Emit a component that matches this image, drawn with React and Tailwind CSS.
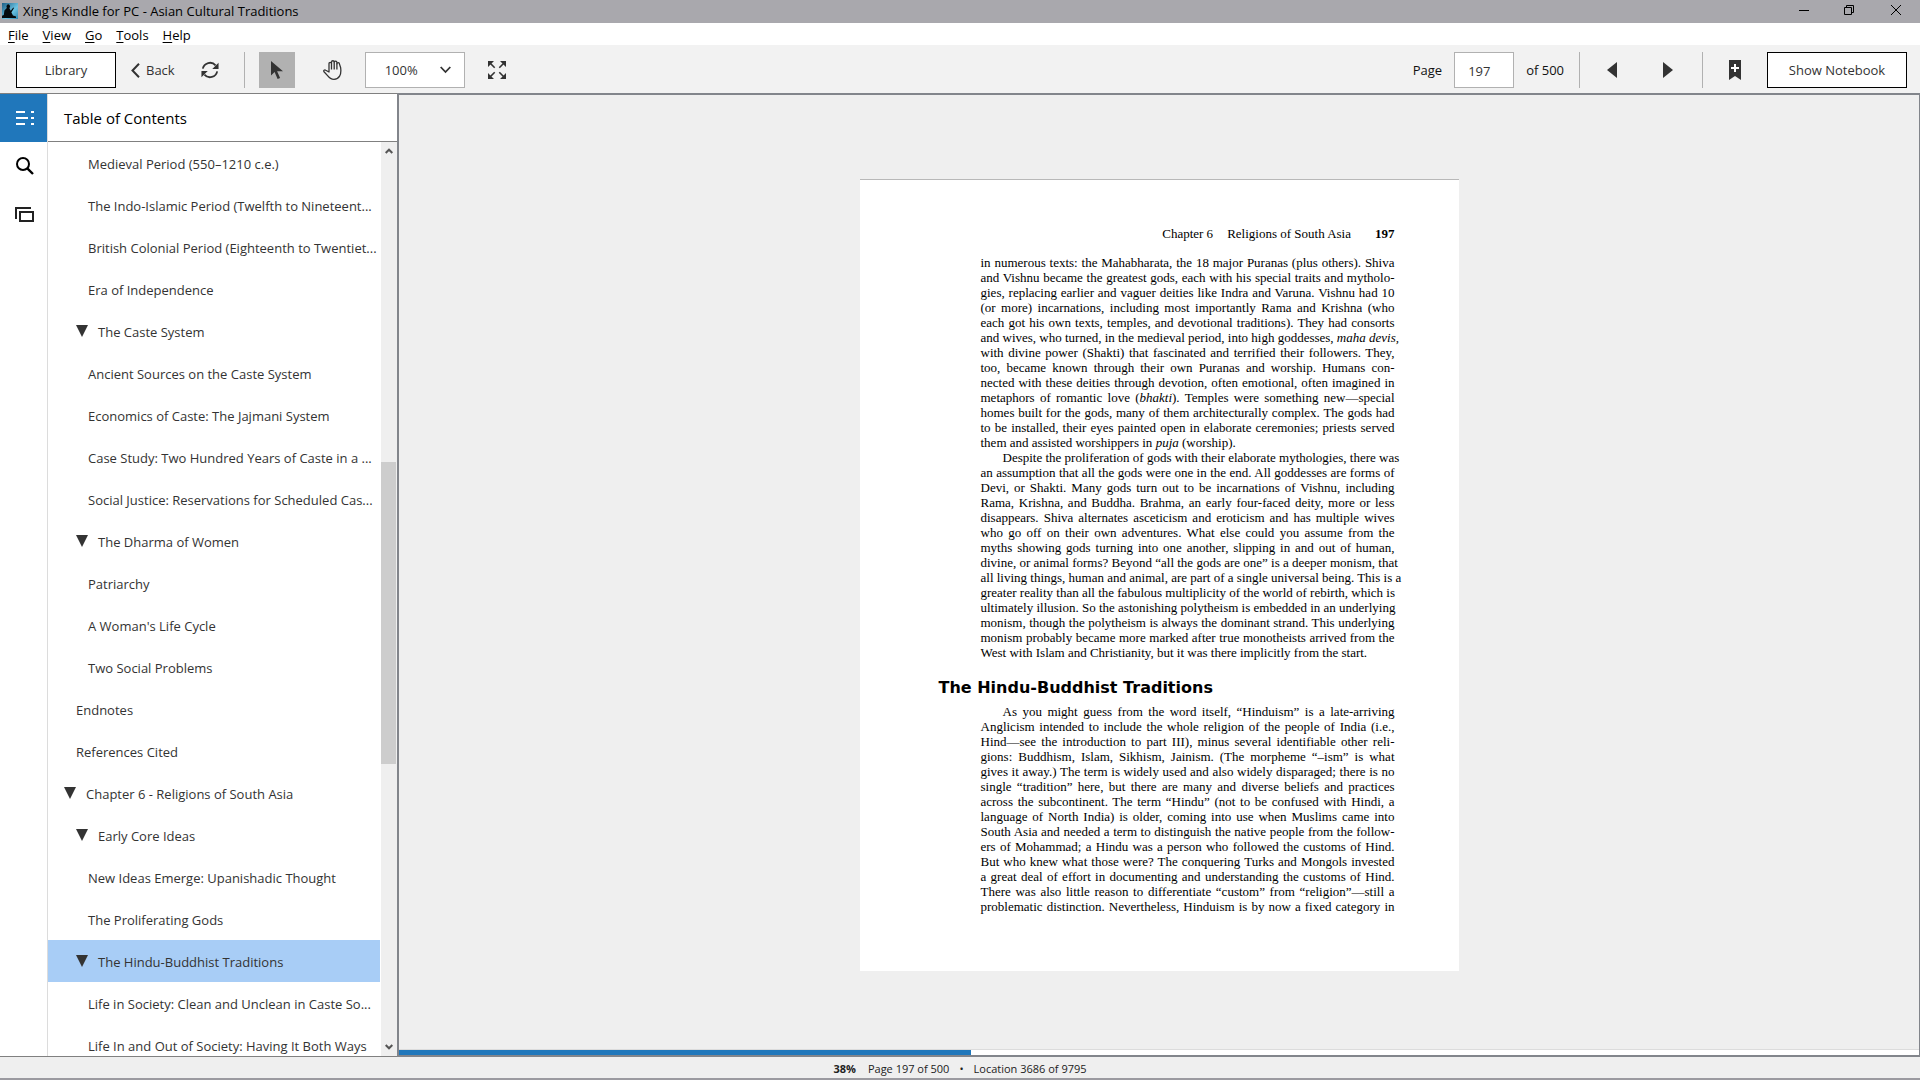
import { useState } from "react";

const menus = ["File", "View", "Go", "Tools", "Help"];

const tocItems = [
  { level: 3, title: "Medieval Period (550–1210 c.e.)" },
  { level: 3, title: "The Indo-Islamic Period (Twelfth to Nineteent..." },
  { level: 3, title: "British Colonial Period (Eighteenth to Twentiet..." },
  { level: 3, title: "Era of Independence" },
  { level: 2, title: "The Caste System", open: true },
  { level: 3, title: "Ancient Sources on the Caste System" },
  { level: 3, title: "Economics of Caste: The Jajmani System" },
  { level: 3, title: "Case Study: Two Hundred Years of Caste in a ..." },
  { level: 3, title: "Social Justice: Reservations for Scheduled Cas..." },
  { level: 2, title: "The Dharma of Women", open: true },
  { level: 3, title: "Patriarchy" },
  { level: 3, title: "A Woman's Life Cycle" },
  { level: 3, title: "Two Social Problems" },
  { level: 2, title: "Endnotes" },
  { level: 2, title: "References Cited" },
  { level: 1, title: "Chapter 6 - Religions of South Asia", open: true },
  { level: 2, title: "Early Core Ideas", open: true },
  { level: 3, title: "New Ideas Emerge: Upanishadic Thought" },
  { level: 3, title: "The Proliferating Gods" },
  { level: 2, title: "The Hindu-Buddhist Traditions", open: true },
  { level: 3, title: "Life in Society: Clean and Unclean in Caste So..." },
  { level: 3, title: "Life In and Out of Society: Having It Both Ways" },
];

const indents = { 1: "pl-4", 2: "pl-7", 3: "pl-10" };

// *word* marks italics
const firstParagraph = [
  "in numerous texts: the Mahabharata, the 18 major Puranas (plus others). Shiva",
  "and Vishnu became the greatest gods, each with his special traits and mytholo-",
  "gies, replacing earlier and vaguer deities like Indra and Varuna. Vishnu had 10",
  "(or more) incarnations, including most importantly Rama and Krishna (who",
  "each got his own texts, temples, and devotional traditions). They had consorts",
  "and wives, who turned, in the medieval period, into high goddesses, *maha devis,*",
  "with divine power (Shakti) that fascinated and terrified their followers. They,",
  "too, became known through their own Puranas and worship. Humans con-",
  "nected with these deities through devotion, often emotional, often imagined in",
  "metaphors of romantic love (*bhakti*). Temples were something new—special",
  "homes built for the gods, many of them architecturally complex. The gods had",
  "to be installed, their eyes painted open in elaborate ceremonies; priests served",
  "them and assisted worshippers in *puja* (worship).",
];

const secondParagraph = [
  "Despite the proliferation of gods with their elaborate mythologies, there was",
  "an assumption that all the gods were one in the end. All goddesses are forms of",
  "Devi, or Shakti. Many gods turn out to be incarnations of Vishnu, including",
  "Rama, Krishna, and Buddha. Brahma, an early four-faced deity, more or less",
  "disappears. Shiva alternates asceticism and eroticism and has multiple wives",
  "who go off on their own adventures. What else could you assume from the",
  "myths showing gods turning into one another, slipping in and out of human,",
  "divine, or animal forms? Beyond “all the gods are one” is a deeper monism, that",
  "all living things, human and animal, are part of a single universal being. This is a",
  "greater reality than all the fabulous multiplicity of the world of rebirth, which is",
  "ultimately illusion. So the astonishing polytheism is embedded in an underlying",
  "monism, though the polytheism is always the dominant strand. This underlying",
  "monism probably became more marked after true monotheists arrived from the",
  "West with Islam and Christianity, but it was there implicitly from the start.",
];

const thirdParagraph = [
  "As you might guess from the word itself, “Hinduism” is a late-arriving",
  "Anglicism intended to include the whole religion of the people of India (i.e.,",
  "Hind—see the introduction to part III), minus several identifiable other reli-",
  "gions: Buddhism, Islam, Sikhism, Jainism. (The morpheme “–ism” is what",
  "gives it away.) The term is widely used and also widely disparaged; there is no",
  "single “tradition” here, but there are many and diverse beliefs and practices",
  "across the subcontinent. The term “Hindu” (not to be confused with Hindi, a",
  "language of North India) is older, coming into use when Muslims came into",
  "South Asia and needed a term to distinguish the native people from the follow-",
  "ers of Mohammad; a Hindu was a person who followed the customs of Hind.",
  "But who knew what those were? The conquering Turks and Mongols invested",
  "a great deal of effort in documenting and understanding the customs of Hind.",
  "There was also little reason to differentiate “custom” from “religion”—still a",
  "problematic distinction. Nevertheless, Hinduism is by now a fixed category in",
];

function Paragraph({ lines, indent, full }) {
  return (
    <p>
      {lines.map((line, i) => {
        const ragged = i === lines.length - 1 && !full;
        return (
          <span
            key={i}
            className={`block whitespace-nowrap ${ragged ? "" : "[text-align-last:justify]"} ${
              indent && i === 0 ? "pl-[22px]" : ""
            }`}
          >
            {line.split("*").map((part, j) => (j % 2 ? <em key={j}>{part}</em> : part))}
          </span>
        );
      })}
    </p>
  );
}

function TitleBar() {
  return (
    <header className="flex h-[23px] shrink-0 items-start bg-[#a9a8ad] pl-0.5 text-black">
      <svg className="mt-[3px] h-4 w-4" viewBox="0 0 16 16">
        <defs>
          <linearGradient id="sky" x1="0" y1="0" x2="1" y2="1">
            <stop offset="0" stopColor="#1d5f86" />
            <stop offset="0.6" stopColor="#6cc4e4" />
            <stop offset="1" stopColor="#2f87b0" />
          </linearGradient>
        </defs>
        <rect width="16" height="16" fill="url(#sky)" />
        <path
          d="M5.500 1.500a1.900 1.900 0 0 1 2.500 2.300L7.400 5.200l1.300 2.600 2.600-3.200.7.500-2.600 4.300 1.600 3 3 1.200V15H0v-2.200l1.800-.8L2.400 7.500 4.800 5 4.400 3z"
          fill="#05090c"
        />
      </svg>
      <h1 className="ml-[5px] text-[13px] leading-[22px]">Xing's Kindle for PC - Asian Cultural Traditions</h1>
      <div className="ml-auto flex">
        <button aria-label="Minimize" className="flex h-5 w-[45px] items-center justify-center">
          <svg width="10" height="10" viewBox="0 0 10 10"><path d="M0 5.5h10" stroke="#000" /></svg>
        </button>
        <button aria-label="Restore" className="flex h-5 w-[45px] items-center justify-center">
          <svg width="10" height="10" viewBox="0 0 10 10" fill="none" stroke="#000">
            <path d="M.5 2.5h7v7h-7zM2.5 2.5v-2h7v7h-2" />
          </svg>
        </button>
        <button aria-label="Close" className="flex h-5 w-[49px] items-center justify-center">
          <svg width="10" height="10" viewBox="0 0 10 10"><path d="M0 0l10 10M10 0L0 10" stroke="#000" /></svg>
        </button>
      </div>
    </header>
  );
}

function Divider() {
  return <div className="h-9 w-px bg-[#b1b1b1]" />;
}

function Toolbar() {
  const [page, setPage] = useState("197");
  const [zoom, setZoom] = useState("100%");

  return (
    <div className="flex h-12 shrink-0 items-center bg-[#f2f2f2] pt-0.5 pr-[13px] pl-4 text-[#333]">
      <button className="h-9 w-[100px] border border-black bg-white pt-0.5 text-[13px]">Library</button>
      <button className="ml-[15px] flex items-center gap-1.5 text-[13px]">
        <svg width="9" height="15" viewBox="0 0 9 15" fill="none" stroke="#333" strokeWidth="2">
          <path d="M8 .8L1.500 7.500 8 14.200" />
        </svg>
        <span className="pt-0.5">Back</span>
      </button>
      <button aria-label="Sync" className="ml-[26px]">
        <svg width="18" height="18" viewBox="0 0 20 20" fill="none" stroke="#333" strokeWidth="2">
          <path d="M2 8.500A8.200 8.200 0 0 1 16.200 4.800M18 11.500A8.200 8.200 0 0 1 3.800 15.200" />
          <path d="M19.500 2v7h-7zM.5 18v-7h7z" fill="#333" stroke="none" />
        </svg>
      </button>
      <div className="ml-[25px]"><Divider /></div>
      <button aria-label="Select text" className="ml-3.5 flex h-9 w-9 items-center justify-center bg-[#b1b1b1]">
        <svg width="12" height="18" viewBox="0 0 12 18">
          <path d="M0 0v14.500l3.600-3.400 3 6.900 2.500-1.100-3-6.700H12z" fill="#333" />
        </svg>
      </button>
      <button aria-label="Pan" className="ml-7">
        <svg width="20" height="20" viewBox="0 0 20 20" fill="none" stroke="#333" strokeWidth="1.300" strokeLinejoin="round">
          <path d="M6 12V3.700a1.250 1.250 0 0 1 2.500 0V2.100a1.300 1.300 0 0 1 2.700 0v.4a1.300 1.300 0 0 1 2.700 0v1.300a1.250 1.250 0 0 1 2.500.1l1.200 3.600c.6 4 .2 6.700-1 8.700-1.200 2.100-3 3.100-5.600 3.100-3.200 0-4.800-1.400-6.200-3.400L1 11.700c-.8-1.300.6-2.300 1.700-1.500z" />
          <path d="M8.500 3.700V9.500M11.200 2.500v7M13.900 3.600v5.900" />
        </svg>
      </button>
      <div className="relative ml-[22px]">
        <select
          aria-label="Zoom"
          value={zoom}
          onChange={(e) => setZoom(e.target.value)}
          className="h-9 w-[100px] appearance-none border border-[#b1b1b1] bg-white pt-0.5 pl-[19px] text-[13px]"
        >
          <option>75%</option>
          <option>100%</option>
          <option>150%</option>
        </select>
        <svg className="pointer-events-none absolute top-3.5 right-3.5" width="11" height="8" viewBox="0 0 11 8" fill="none" stroke="#333" strokeWidth="1.800">
          <path d="M.7 1l4.800 5 4.800-5" />
        </svg>
      </div>
      <button aria-label="Full screen" className="ml-[23px]">
        <svg width="18" height="18" viewBox="0 0 18 18" fill="#333" stroke="#333">
          <path d="M0 0h6L0 6zM18 0v6l-6-6zM0 18v-6l6 6zM18 18h-6l6-6z" stroke="none" />
          <path d="M2 2l4.700 4.700M16 2l-4.700 4.700M2 16l4.700-4.700M16 16l-4.700-4.700" strokeWidth="1.600" />
        </svg>
      </button>

      <div className="ml-auto flex items-center">
        <label htmlFor="page" className="pt-0.5 text-[13px] text-[#111]">Page</label>
        <input
          id="page"
          value={page}
          onChange={(e) => setPage(e.target.value)}
          className="ml-3 h-9 w-[60px] border border-[#b1b1b1] bg-white pt-0.5 pl-[13px] text-[13px]"
        />
        <span className="ml-3 pt-0.5 text-[13px] text-[#111]">of 500</span>
        <div className="ml-[15px]"><Divider /></div>
        <button aria-label="Previous page" className="ml-[27px]">
          <svg width="10" height="16" viewBox="0 0 10 16"><path d="M10 0v16L0 8z" fill="#333" /></svg>
        </button>
        <button aria-label="Next page" className="ml-[46px]">
          <svg width="10" height="16" viewBox="0 0 10 16"><path d="M0 0v16l10-8z" fill="#333" /></svg>
        </button>
        <div className="ml-[29px]"><Divider /></div>
        <button aria-label="Bookmark" className="ml-[26px]">
          <svg width="12" height="20" viewBox="0 0 12 20">
            <path d="M0 0h12v20l-6-4-6 4z" fill="#333" />
            <path d="M6 4v8M2 8h8" stroke="#fff" strokeWidth="2" />
          </svg>
        </button>
        <button className="ml-[26px] h-9 w-[140px] border border-black bg-white pt-0.5 text-[13px]">Show Notebook</button>
      </div>
    </div>
  );
}

function Rail() {
  return (
    <nav className="flex w-12 shrink-0 flex-col border-r border-[#dcdcdc] bg-white">
      <button aria-label="Table of Contents" className="flex h-12 items-center justify-center bg-[#2077bb] pl-0.5">
        <svg width="18" height="14" viewBox="0 0 18 14" stroke="#fff" strokeWidth="2">
          <path d="M0 1h9M0 7h12M0 13h9M15 1h3M15 7h3M15 13h3" />
        </svg>
      </button>
      <button aria-label="Search" className="flex h-12 items-center justify-center pl-0.5">
        <svg width="18" height="18" viewBox="0 0 18 18" fill="none" stroke="#000" strokeWidth="2">
          <circle cx="7" cy="7" r="6" />
          <path d="M11.300 11.300l5.700 5.700" strokeWidth="2.400" />
        </svg>
      </button>
      <button aria-label="Flashcards" className="flex h-12 items-center justify-center pl-0.5">
        <svg width="19" height="15" viewBox="0 0 19 15" fill="none" stroke="#222" strokeWidth="2">
          <path d="M1 12V1h15" />
          <path d="M5 5h13v9H5z" />
        </svg>
      </button>
    </nav>
  );
}

function TableOfContents() {
  const [selected, setSelected] = useState(19);

  return (
    <aside className="flex w-[349px] shrink-0 flex-col bg-white">
      <h2 className="h-12 shrink-0 border-b border-[#808080] pl-4 text-[15px] leading-[48px] text-black">
        Table of Contents
      </h2>
      <div className="flex min-h-0 flex-1">
        <ul className="w-[332px] overflow-hidden">
          {tocItems.map((item, i) => (
            <li key={item.title}>
              <button
                onClick={() => setSelected(i)}
                className={`flex h-[42px] w-full items-center gap-2.5 text-left text-[13px] whitespace-nowrap text-[#333] ${
                  indents[item.level]
                } ${selected === i ? "bg-[#a8cdf6]" : ""}`}
              >
                {item.open && (
                  <svg width="12" height="12" viewBox="0 0 12 12"><path d="M0 0h12L6 12z" fill="#333" /></svg>
                )}
                <span className="pt-1">{item.title}</span>
              </button>
            </li>
          ))}
        </ul>
        <div className="ml-px flex w-4 flex-col items-center bg-[#efefef]">
          <svg className="mt-1.5" width="8" height="6" viewBox="0 0 8 6" fill="none" stroke="#555" strokeWidth="2">
            <path d="M.7 5L4 1.700 7.300 5" />
          </svg>
          <div className="mt-[308px] h-[302px] w-full border-r border-[#efefef] bg-[#cdcdcd]" />
          <svg className="mt-auto mb-1.5" width="8" height="6" viewBox="0 0 8 6" fill="none" stroke="#555" strokeWidth="2">
            <path d="M.7 1L4 4.300 7.300 1" />
          </svg>
        </div>
      </div>
    </aside>
  );
}

function Reader() {
  return (
    <main className="flex min-w-0 flex-1 flex-col border-2 border-r border-[#82858b] bg-[#efefef]">
      <div className="flex min-h-0 flex-1 justify-center overflow-hidden pt-[84px]">
        <article className="h-fit w-[599px] border-t border-[#b8b8b8] bg-white pt-[46px] pr-16 pb-[57px] pl-[121px] font-['Liberation_Serif',serif] text-[13px] leading-[15px] text-black">
          <div className="flex justify-end">
            <span>Chapter 6</span>
            <span className="ml-3.5">Religions of South Asia</span>
            <b className="ml-6">197</b>
          </div>
          <div className="mt-[14px]">
            <Paragraph lines={firstParagraph} />
            <Paragraph lines={secondParagraph} indent />
          </div>
          <h3 className="mt-[18px] -ml-[42px] font-['DejaVu_Sans',sans-serif] text-base leading-[20px] font-bold text-black">
            The Hindu-Buddhist Traditions
          </h3>
          <div className="mt-1.5">
            <Paragraph lines={thirdParagraph} indent full />
          </div>
        </article>
      </div>
      <div className="h-1.5 shrink-0 border-t border-[#dcdcdc] bg-white">
        <div className="h-full w-[37.6%] bg-[#2077bb]" />
      </div>
    </main>
  );
}

export default function App() {
  return (
    <div className="flex h-screen flex-col overflow-hidden bg-white font-['Open_Sans','Noto_Sans',sans-serif]">
      <TitleBar />
      <nav className="flex h-[22px] shrink-0 items-center gap-3.5 bg-white px-2 pt-1 text-[13px] text-black">
        {menus.map((name) => (
          <button key={name}>
            <u className="underline-offset-2">{name[0]}</u>
            {name.slice(1)}
          </button>
        ))}
      </nav>
      <Toolbar />
      <div className="flex min-h-0 flex-1">
        <div className="flex border-y border-[#808080]">
          <Rail />
          <TableOfContents />
        </div>
        <Reader />
      </div>
      <footer className="flex h-[23px] shrink-0 items-center justify-center border-b-2 border-[#9b9aa0] bg-[#efefef] pt-1 text-[11px] text-[#222]">
        <b>38%</b>
        <span className="ml-3">Page 197 of 500</span>
        <span className="mx-2.5">•</span>
        <span>Location 3686 of 9795</span>
      </footer>
    </div>
  );
}
